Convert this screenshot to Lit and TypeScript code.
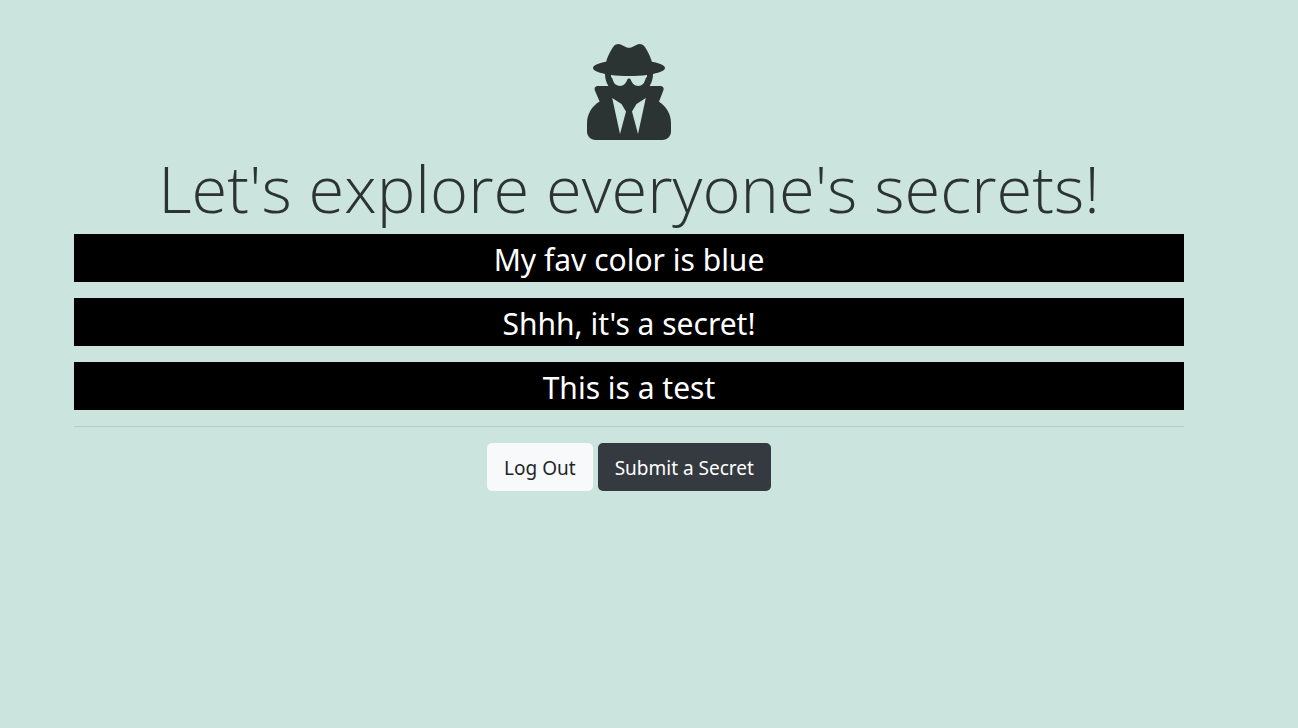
import { LitElement, html, css } from "lit";
import { customElement, property } from "lit/decorators.js";

@customElement("app-root")
export class AppRoot extends LitElement {
  @property({ attribute: false })
  secrets: string[] = ["My fav color is blue", "Shhh, it's a secret!", "This is a test"];

  static styles = css`
    :host {
      display: block;
      box-sizing: border-box;
      min-height: 100vh;
      padding: 44px 40px 32px 0;
      background: #cbe4de;
      color: #2c3333;
      font-family: "Segoe UI", "Noto Sans", sans-serif;
      line-height: 1.5;
    }
    .container {
      box-sizing: border-box;
      max-width: 1140px;
      margin: 0 auto;
      padding: 0 15px;
      text-align: center;
    }
    .icon {
      display: block;
      height: 96px;
      width: 84px;
      margin: 0 auto;
      fill: currentColor;
    }
    h1 {
      margin: 8px 0 6px;
      font-family: "Segoe UI", "Open Sans", sans-serif;
      font-size: 65px;
      font-weight: 300;
      line-height: 80px;
    }
    .secrets {
      display: grid;
      gap: 16px;
    }
    .secret {
      margin: 0;
      padding-top: 4px;
      background: #000;
      color: #fff;
      font-size: 30px;
      line-height: 44px;
    }
    hr {
      margin: 16px 0;
      border: 0;
      border-top: 1px solid rgba(0, 0, 0, 0.1);
    }
    .actions {
      display: flex;
      justify-content: center;
      gap: 5px;
    }
    .btn {
      padding: 10px 17px 8px;
      border-radius: 5px;
      font-size: 19px;
      line-height: 30px;
      text-decoration: none;
    }
    .light {
      background: #f8f9fa;
      color: #212529;
    }
    .dark {
      background: #343a40;
      color: #fff;
    }
  `;

  render() {
    return html`
      <main class="container">
        <svg class="icon" viewBox="0 0 448 512" aria-hidden="true">
          <path d="M383.9 308.3l23.9-62.600c4-10.500-3.700-21.700-15-21.700h-58.500c11-18.900 17.800-40.600 17.800-64v-.3c39.200-7.800 64-19.100 64-31.700 0-13.300-27.300-25.100-70.100-33-9.200-32.800-27-65.800-40.600-82.800-9.500-11.900-25.900-15.600-39.500-8.800l-27.600 13.800c-9 4.500-19.600 4.500-28.600 0L182.100 3.400c-13.600-6.800-30-3.100-39.500 8.800-13.500 17-31.400 50-40.600 82.800-42.700 7.900-70 19.700-70 33 0 12.600 24.800 23.900 64 31.700v.3c0 23.400 6.800 45.100 17.800 64H56.300c-11.500 0-19.200 11.700-14.700 22.300l25.800 60.200C27.300 329.800 0 372.700 0 422.400v44.800C0 491.900 20.100 512 44.800 512h358.400c24.700 0 44.800-20.100 44.800-44.800v-44.800c0-48.400-25.800-90.400-64.100-114.100zM176 480l-41.600-192 49.600 32 24 40-32 120zm96 0l-32-120 24-40 49.600-32L272 480zm41.700-298.500c-3.900 11.900-7 24.600-16.500 33.400-10.100 9.300-48 22.400-64-25-2.800-8.400-15.400-8.400-18.300 0-17 50.200-56 32.400-64 25-9.500-8.800-12.700-21.500-16.500-33.400-.8-2.500-6.300-5.700-6.300-5.800v-10.800c28.300 3.600 61 5.800 96 5.800s67.700-2.100 96-5.800v10.800c-.1.100-5.600 3.200-6.400 5.800z"/>
        </svg>
        <h1>Let's explore everyone's secrets!</h1>
        <div class="secrets">
          ${this.secrets.map((secret) => html`<p class="secret">${secret}</p>`)}
        </div>
        <hr />
        <nav class="actions">
          <a class="btn light" href="/logout">Log Out</a>
          <a class="btn dark" href="/submit">Submit a Secret</a>
        </nav>
      </main>
    `;
  }
}
